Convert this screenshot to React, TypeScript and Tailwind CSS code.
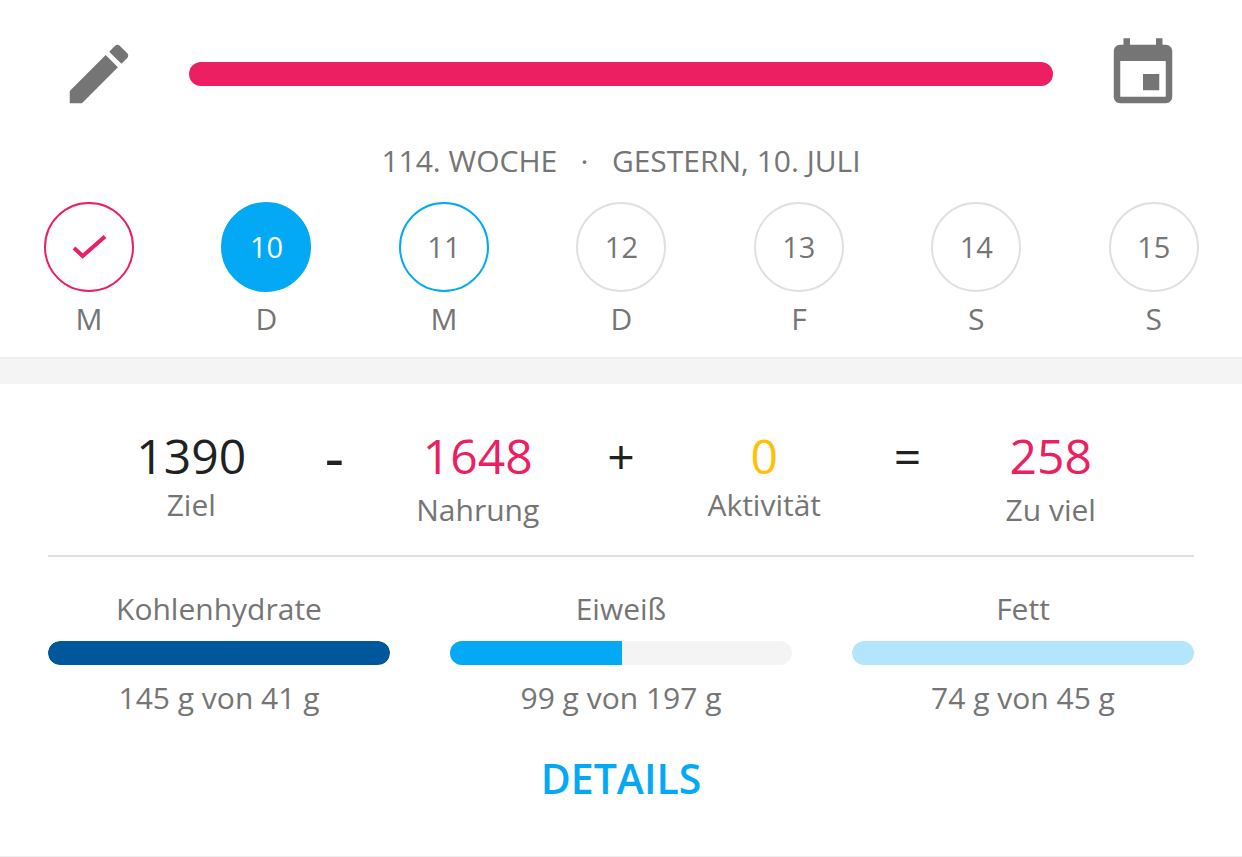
import React from "react";

const days = [
    { num: "", label: "M", state: "done" },
    { num: "10", label: "D", state: "active" },
    { num: "11", label: "M", state: "today" },
    { num: "12", label: "D", state: "" },
    { num: "13", label: "F", state: "" },
    { num: "14", label: "S", state: "" },
    { num: "15", label: "S", state: "" },
];

const stats = [
    { value: "1390", label: "Ziel", color: "text-[#212121]", op: "-", opClass: "text-[60px] font-medium", labelClass: "mt-[-1px]" },
    { value: "1648", label: "Nahrung", color: "text-[#ec1f63]", op: "+", opClass: "text-[48px] font-medium", labelClass: "mt-[4px]" },
    { value: "0", label: "Aktivität", color: "text-[#ffc107]", op: "=", opClass: "text-[48px] font-medium", labelClass: "mt-[-1px]" },
    { value: "258", label: "Zu viel", color: "text-[#ec1f63]", op: "", opClass: "", labelClass: "mt-[4px]" },
];

const macros = [
    { name: "Kohlenhydrate", text: "145 g von 41 g", fill: "bg-[#01579b]", width: 100 },
    { name: "Eiweiß", text: "99 g von 197 g", fill: "bg-[#03a9f4]", width: 50.3 },
    { name: "Fett", text: "74 g von 45 g", fill: "bg-[#b3e5fc]", width: 100 },
];

const DayCircle = ({ num, state }: { num: string; state: string }) => {
    let cls = "border-[#e0e0e0] text-[#757575]";
    if (state === "done") cls = "border-[#ec1f63]";
    if (state === "active") cls = "border-[#03a9f4] bg-[#03a9f4] text-white";
    if (state === "today") cls = "border-[#03a9f4] text-[#757575]";
    return (
        <div className={`w-[90px] h-[90px] rounded-full border-[2.5px] flex items-center justify-center text-[29px] ${cls}`}>
            {state === "done" ? (
                <svg width="40" height="40" viewBox="0 0 40 40" fill="none" stroke="#ec1f63" strokeWidth="4">
                    <path d="M5 21 L13.7 29 L36 9.5" />
                </svg>
            ) : (
                num
            )}
        </div>
    );
};

export default function App() {
    return (
        <div className="w-[1242px] h-[857px] overflow-hidden bg-white font-['Open_Sans',sans-serif] border-b border-[#eeeeee]">
            <div className="flex items-center gap-[51px] px-[60px] pt-[35px]">
                <svg width="78" height="78" viewBox="0 0 24 24" fill="#757575" className="shrink-0">
                    <path d="M3 17.25V21h3.75L17.81 9.94l-3.75-3.75L3 17.25zM20.71 7.04c.39-.39.39-1.02 0-1.41l-2.34-2.34c-.39-.39-1.02-.39-1.41 0l-1.83 1.83 3.75 3.75 1.83-1.83z" />
                </svg>
                <div className="flex-1 h-6 rounded-full bg-[#ec1f63]" />
                <svg width="78" height="78" viewBox="0 0 24 24" fill="#757575" className="shrink-0">
                    <path d="M17 12h-5v5h5v-5zM16 1v2H8V1H6v2H5c-1.11 0-1.99.9-1.99 2L3 19c0 1.1.89 2 2 2h14c1.1 0 2-.9 2-2V5c0-1.1-.9-2-2-2h-1V1h-2zm3 18H5V8h14v11z" />
                </svg>
            </div>

            <div className="mt-[25px] h-[44px] flex items-center justify-center text-[30px] text-[#757575] whitespace-pre">
                114. WOCHE{"   ·   "}GESTERN, 10. JULI
            </div>

            <div className="mt-[20px] pl-[44px] pr-[43.2px] flex justify-between">
                {days.map((d, i) => (
                    <div key={i} className="w-[90px] flex flex-col items-center">
                        <DayCircle num={d.num} state={d.state} />
                        <div className="mt-[8px] h-[38px] text-[30px] leading-[38px] text-[#757575]">{d.label}</div>
                    </div>
                ))}
            </div>

            <div className="mt-[19px] h-[27px] bg-[#f4f4f4] border-t-[2px] border-[#eeeeee]" />

            <div className="px-[48px]">
                <div className="h-[173px] pt-[41px] grid grid-cols-4 border-b-[2px] border-[#e0e0e0]">
                    {stats.map((s) => (
                        <div key={s.value} className="relative flex flex-col items-center">
                            <div className={`text-[48px] leading-[62px] ${s.color}`}>{s.value}</div>
                            <div className={`text-[30px] leading-[38px] text-[#757575] ${s.labelClass}`}>{s.label}</div>
                            {s.op && (
                                <div className={`absolute right-0 top-0 translate-x-1/2 leading-[62px] text-[#212121] ${s.opClass}`}>
                                    {s.op}
                                </div>
                            )}
                        </div>
                    ))}
                </div>

                <div className="mt-[33px] grid grid-cols-3 gap-[60px]">
                    {macros.map((m) => (
                        <div key={m.name} className="flex flex-col items-center">
                            <div className="text-[30px] leading-[38px] text-[#757575]">{m.name}</div>
                            <div className="mt-[13px] w-full h-6 rounded-full bg-[#f4f4f4] overflow-hidden">
                                <div className={`h-full ${m.fill} ${m.width === 100 ? "rounded-full" : ""}`} style={{ width: `${m.width}%` }} />
                            </div>
                            <div className="mt-[14px] text-[30px] leading-[38px] text-[#757575]">{m.text}</div>
                        </div>
                    ))}
                </div>

                <div className="mt-[35px] text-center text-[41px] leading-[52px] font-semibold text-[#03a9f4]">DETAILS</div>
            </div>
        </div>
    );
}
